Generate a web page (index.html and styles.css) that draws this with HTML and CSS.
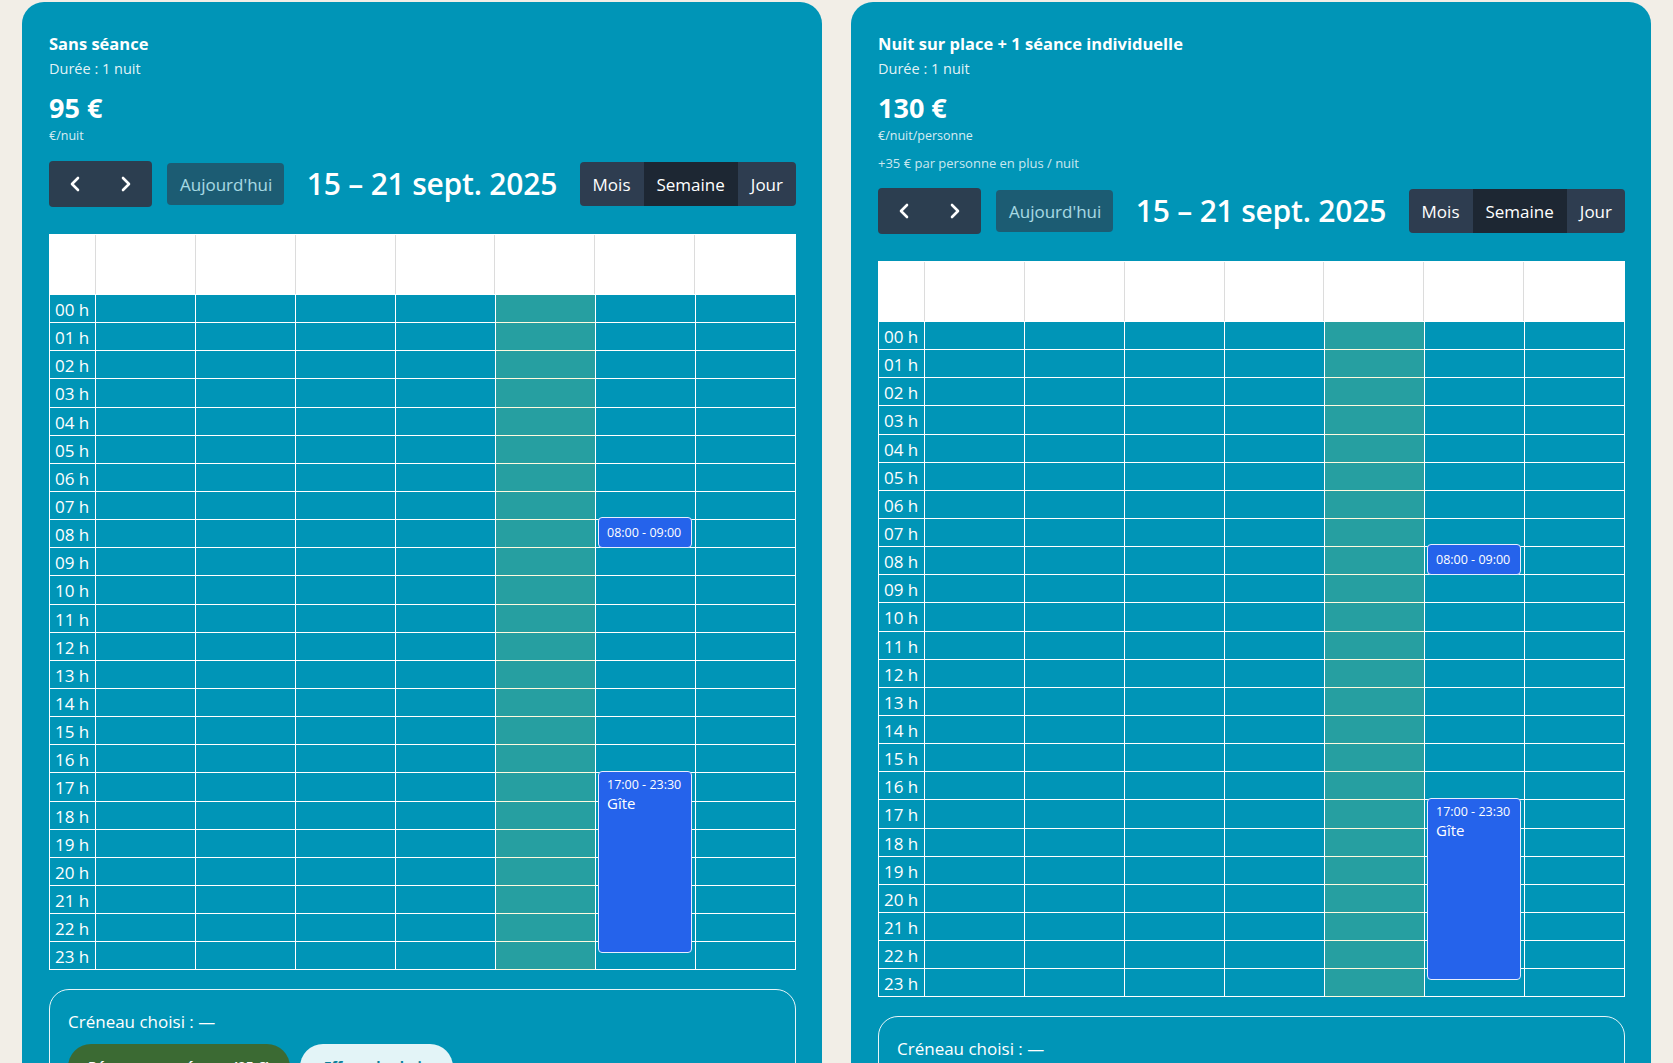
FILE: index.html
```html
<!DOCTYPE html>
<html lang="fr">
<head>
<meta charset="utf-8">
<title>Réservation</title>
<link rel="stylesheet" href="styles.css">
</head>
<body>
<div class="page">

  <section class="card">
    <h3 class="offer-title">Sans séance</h3>
    <div class="offer-duration">Durée : 1 nuit</div>
    <div class="offer-price">95 €</div>
    <div class="offer-unit">€/nuit</div>

    <div class="toolbar">
      <div class="tb-chunk">
        <div class="btn-group">
          <button class="fc-btn nav-btn" aria-label="prev"><svg width="12" height="16" viewBox="0 0 12 16"><polyline points="9,2 3,8 9,14" fill="none" stroke="#fff" stroke-width="2.6" stroke-linecap="round" stroke-linejoin="round"/></svg></button>
          <button class="fc-btn nav-btn" aria-label="next"><svg width="12" height="16" viewBox="0 0 12 16"><polyline points="3,2 9,8 3,14" fill="none" stroke="#fff" stroke-width="2.6" stroke-linecap="round" stroke-linejoin="round"/></svg></button>
        </div>
        <button class="fc-btn today-btn">Aujourd'hui</button>
      </div>
      <h2 class="tb-title">15 – 21 sept. 2025</h2>
      <div class="btn-group view-group">
        <button class="fc-btn view-btn">Mois</button>
        <button class="fc-btn view-btn active">Semaine</button>
        <button class="fc-btn view-btn">Jour</button>
      </div>
    </div>

    <div class="cal">
      <div class="cal-head">
        <div class="hcell"></div><div class="hcell"></div><div class="hcell"></div><div class="hcell"></div><div class="hcell"></div><div class="hcell"></div><div class="hcell"></div><div class="hcell"></div>
      </div>
      <div class="cal-body">
        <div class="slots">
          <div class="slot"><div class="slot-label">00 h</div><div class="slot-lane"></div></div>
          <div class="slot"><div class="slot-label">01 h</div><div class="slot-lane"></div></div>
          <div class="slot"><div class="slot-label">02 h</div><div class="slot-lane"></div></div>
          <div class="slot"><div class="slot-label">03 h</div><div class="slot-lane"></div></div>
          <div class="slot"><div class="slot-label">04 h</div><div class="slot-lane"></div></div>
          <div class="slot"><div class="slot-label">05 h</div><div class="slot-lane"></div></div>
          <div class="slot"><div class="slot-label">06 h</div><div class="slot-lane"></div></div>
          <div class="slot"><div class="slot-label">07 h</div><div class="slot-lane"></div></div>
          <div class="slot"><div class="slot-label">08 h</div><div class="slot-lane"></div></div>
          <div class="slot"><div class="slot-label">09 h</div><div class="slot-lane"></div></div>
          <div class="slot"><div class="slot-label">10 h</div><div class="slot-lane"></div></div>
          <div class="slot"><div class="slot-label">11 h</div><div class="slot-lane"></div></div>
          <div class="slot"><div class="slot-label">12 h</div><div class="slot-lane"></div></div>
          <div class="slot"><div class="slot-label">13 h</div><div class="slot-lane"></div></div>
          <div class="slot"><div class="slot-label">14 h</div><div class="slot-lane"></div></div>
          <div class="slot"><div class="slot-label">15 h</div><div class="slot-lane"></div></div>
          <div class="slot"><div class="slot-label">16 h</div><div class="slot-lane"></div></div>
          <div class="slot"><div class="slot-label">17 h</div><div class="slot-lane"></div></div>
          <div class="slot"><div class="slot-label">18 h</div><div class="slot-lane"></div></div>
          <div class="slot"><div class="slot-label">19 h</div><div class="slot-lane"></div></div>
          <div class="slot"><div class="slot-label">20 h</div><div class="slot-lane"></div></div>
          <div class="slot"><div class="slot-label">21 h</div><div class="slot-lane"></div></div>
          <div class="slot"><div class="slot-label">22 h</div><div class="slot-lane"></div></div>
          <div class="slot"><div class="slot-label">23 h</div><div class="slot-lane"></div></div>
        </div>
        <div class="cols">
          <div class="col"></div>
          <div class="col"></div>
          <div class="col"></div>
          <div class="col"></div>
          <div class="col today"></div>
          <div class="col">
            <div class="event ev-morning"><div class="ev-time">08:00 - 09:00</div></div>
            <div class="event ev-evening"><div class="ev-time">17:00 - 23:30</div><div class="ev-title">Gîte</div></div>
          </div>
          <div class="col"></div>
        </div>
      </div>
    </div>

    <div class="slot-box">
      <div class="slot-text">Créneau choisi : —</div>
      <div class="actions">
        <button class="pill pill-green">Réserver ce créneau (95 €)</button>
        <button class="pill pill-light">Effacer le choix</button>
      </div>
    </div>
  </section>

  <section class="card">
    <h3 class="offer-title">Nuit sur place + 1 séance individuelle</h3>
    <div class="offer-duration">Durée : 1 nuit</div>
    <div class="offer-price">130 €</div>
    <div class="offer-unit">€/nuit/personne</div>
    <div class="offer-extra">+35 € par personne en plus / nuit</div>

    <div class="toolbar">
      <div class="tb-chunk">
        <div class="btn-group">
          <button class="fc-btn nav-btn" aria-label="prev"><svg width="12" height="16" viewBox="0 0 12 16"><polyline points="9,2 3,8 9,14" fill="none" stroke="#fff" stroke-width="2.6" stroke-linecap="round" stroke-linejoin="round"/></svg></button>
          <button class="fc-btn nav-btn" aria-label="next"><svg width="12" height="16" viewBox="0 0 12 16"><polyline points="3,2 9,8 3,14" fill="none" stroke="#fff" stroke-width="2.6" stroke-linecap="round" stroke-linejoin="round"/></svg></button>
        </div>
        <button class="fc-btn today-btn">Aujourd'hui</button>
      </div>
      <h2 class="tb-title">15 – 21 sept. 2025</h2>
      <div class="btn-group view-group">
        <button class="fc-btn view-btn">Mois</button>
        <button class="fc-btn view-btn active">Semaine</button>
        <button class="fc-btn view-btn">Jour</button>
      </div>
    </div>

    <div class="cal">
      <div class="cal-head">
        <div class="hcell"></div><div class="hcell"></div><div class="hcell"></div><div class="hcell"></div><div class="hcell"></div><div class="hcell"></div><div class="hcell"></div><div class="hcell"></div>
      </div>
      <div class="cal-body">
        <div class="slots">
          <div class="slot"><div class="slot-label">00 h</div><div class="slot-lane"></div></div>
          <div class="slot"><div class="slot-label">01 h</div><div class="slot-lane"></div></div>
          <div class="slot"><div class="slot-label">02 h</div><div class="slot-lane"></div></div>
          <div class="slot"><div class="slot-label">03 h</div><div class="slot-lane"></div></div>
          <div class="slot"><div class="slot-label">04 h</div><div class="slot-lane"></div></div>
          <div class="slot"><div class="slot-label">05 h</div><div class="slot-lane"></div></div>
          <div class="slot"><div class="slot-label">06 h</div><div class="slot-lane"></div></div>
          <div class="slot"><div class="slot-label">07 h</div><div class="slot-lane"></div></div>
          <div class="slot"><div class="slot-label">08 h</div><div class="slot-lane"></div></div>
          <div class="slot"><div class="slot-label">09 h</div><div class="slot-lane"></div></div>
          <div class="slot"><div class="slot-label">10 h</div><div class="slot-lane"></div></div>
          <div class="slot"><div class="slot-label">11 h</div><div class="slot-lane"></div></div>
          <div class="slot"><div class="slot-label">12 h</div><div class="slot-lane"></div></div>
          <div class="slot"><div class="slot-label">13 h</div><div class="slot-lane"></div></div>
          <div class="slot"><div class="slot-label">14 h</div><div class="slot-lane"></div></div>
          <div class="slot"><div class="slot-label">15 h</div><div class="slot-lane"></div></div>
          <div class="slot"><div class="slot-label">16 h</div><div class="slot-lane"></div></div>
          <div class="slot"><div class="slot-label">17 h</div><div class="slot-lane"></div></div>
          <div class="slot"><div class="slot-label">18 h</div><div class="slot-lane"></div></div>
          <div class="slot"><div class="slot-label">19 h</div><div class="slot-lane"></div></div>
          <div class="slot"><div class="slot-label">20 h</div><div class="slot-lane"></div></div>
          <div class="slot"><div class="slot-label">21 h</div><div class="slot-lane"></div></div>
          <div class="slot"><div class="slot-label">22 h</div><div class="slot-lane"></div></div>
          <div class="slot"><div class="slot-label">23 h</div><div class="slot-lane"></div></div>
        </div>
        <div class="cols">
          <div class="col"></div>
          <div class="col"></div>
          <div class="col"></div>
          <div class="col"></div>
          <div class="col today"></div>
          <div class="col">
            <div class="event ev-morning"><div class="ev-time">08:00 - 09:00</div></div>
            <div class="event ev-evening"><div class="ev-time">17:00 - 23:30</div><div class="ev-title">Gîte</div></div>
          </div>
          <div class="col"></div>
        </div>
      </div>
    </div>

    <div class="slot-box">
      <div class="slot-text">Créneau choisi : —</div>
      <div class="actions">
        <button class="pill pill-green">Réserver ce créneau (130 €)</button>
        <button class="pill pill-light">Effacer le choix</button>
      </div>
    </div>
  </section>

</div>
</body>
</html>
```

FILE: styles.css
```css
* { box-sizing: border-box; }

body {
  margin: 0;
  background: #f2eee7;
  font-family: "Open Sans", "Noto Sans", sans-serif;
  color: #fff;
}

.page {
  display: grid;
  grid-template-columns: 800px 800px;
  column-gap: 29px;
  padding: 2px 22px 0;
  align-items: start;
}

.card {
  background: #0095b7;
  border-radius: 22px;
  padding: 30px 26px 40px 27px;
}

.offer-title {
  margin: 0;
  font-size: 16.5px;
  font-weight: 700;
  line-height: 24px;
}

.offer-duration {
  margin-top: 3px;
  font-size: 14.5px;
  line-height: 20px;
  color: rgba(255,255,255,0.9);
}

.offer-price {
  margin-top: 13px;
  font-size: 27px;
  font-weight: 700;
  line-height: 32px;
}

.offer-unit {
  margin-top: 3px;
  font-size: 12.5px;
  line-height: 18px;
  color: rgba(255,255,255,0.85);
}

.offer-extra {
  margin-top: 9px;
  margin-bottom: 2px;
  font-size: 13px;
  line-height: 18px;
  color: rgba(255,255,255,0.8);
}

/* toolbar */
.toolbar {
  margin-top: 16px;
  display: flex;
  justify-content: space-between;
  align-items: center;
  height: 46px;
}

.tb-chunk {
  display: flex;
  align-items: center;
  gap: 15px;
}

.btn-group {
  display: flex;
  border-radius: 4px;
  overflow: hidden;
}

.fc-btn {
  font-family: inherit;
  font-size: 17px;
  color: #fff;
  border: 0;
  background: #2c3e50;
  margin: 0;
  cursor: pointer;
}

.nav-btn {
  width: 51.5px;
  height: 46px;
  display: flex;
  align-items: center;
  justify-content: center;
  padding: 0;
}

.today-btn {
  height: 42px;
  padding: 0 12px 0 13px;
  border-radius: 4px;
  background: #2c3e50;
  opacity: 0.65;
}

.tb-title {
  margin: 0;
  font-size: 30px;
  font-weight: 600;
  line-height: 40px;
  letter-spacing: -0.2px;
}

.view-group {
  height: 44px;
}

.view-btn {
  padding: 0 13px;
  height: 44px;
  background: #2e3d50;
}

.view-btn.active {
  background: #1d2733;
}

/* calendar */
.cal {
  margin-top: 27px;
  width: 747px;
}

.cal-head {
  display: grid;
  grid-template-columns: 46px repeat(7, 1fr);
  height: 61px;
  background: #fff;
  border: 1px solid #fff;
}

.hcell {
  border-right: 1px solid #dcdcdc;
}

.hcell:last-child {
  border-right: 0;
}

.cal-body {
  position: relative;
  border-left: 1px solid #fff;
  border-right: 1px solid #fff;
}

.slot {
  display: flex;
  height: 28.15px;
  border-bottom: 1px solid #fff;
}

.slot-label {
  width: 45px;
  padding-left: 5px;
  padding-top: 1px;
  font-size: 17px;
  line-height: 27px;
  white-space: nowrap;
}

.slot-lane {
  flex: 1;
}

.cols {
  position: absolute;
  top: 0;
  bottom: 0;
  left: 45px;
  right: 0;
  display: flex;
}

.col {
  position: relative;
  flex: 1;
  border-left: 1px solid #fff;
}

.col.today {
  background: rgba(255, 220, 40, 0.15);
}

.event {
  position: absolute;
  left: 2px;
  right: 3px;
  background: #2563eb;
  border: 1px solid #e8eeff;
  border-radius: 4px;
  padding: 3px 8px;
  color: #fff;
}

.ev-morning {
  top: 222px;
  height: 31px;
  display: flex;
  align-items: center;
}

.ev-evening {
  top: 476px;
  height: 182px;
  padding-top: 5px;
}

.ev-time {
  font-size: 12.5px;
  line-height: 16px;
}

.ev-title {
  font-size: 15px;
  line-height: 20px;
}

/* chosen slot box */
.slot-box {
  margin-top: 19px;
  border: 1px solid rgba(255,255,255,0.9);
  border-radius: 20px;
  padding: 20px 18px 20px;
}

.slot-text {
  font-size: 17px;
  line-height: 24px;
}

.actions {
  display: flex;
  gap: 10px;
  margin-top: 10px;
}

.pill {
  font-family: inherit;
  border: 0;
  border-radius: 24px;
  font-size: 14px;
  font-weight: 700;
  padding: 12px 20px;
  line-height: 22px;
  white-space: nowrap;
}

.pill-green {
  background: #3b6a33;
  color: #fff;
}

.pill-light {
  background: #e3f4f7;
  color: #0a7f9a;
  padding: 12px 23.5px;
}
```
